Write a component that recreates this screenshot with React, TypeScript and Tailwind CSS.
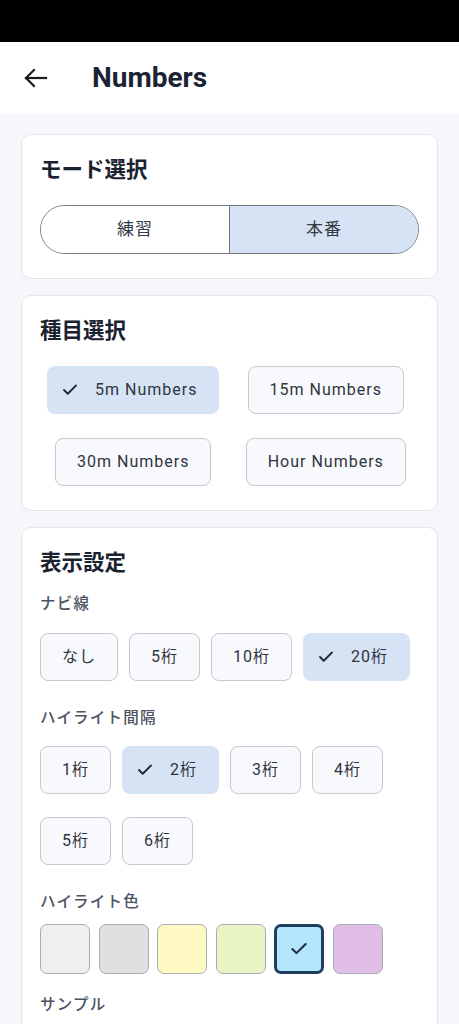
import { Check } from 'lucide-react'

const font = 'font-["Roboto","Noto_Sans_CJK_JP",sans-serif]'

function Chip({ label, selected }: { label: string; selected?: boolean }) {
  if (selected) {
    return (
      <div className="flex h-12 items-center rounded-[8px] bg-[#d6e3f5] pl-[14px] pr-[22px] text-[16px] tracking-[1px] text-[#2f3440]">
        <Check size={18} strokeWidth={2.4} className="text-[#1e2633]" />
        <span className="ml-[16px]">{label}</span>
      </div>
    )
  }
  return (
    <div className="flex h-12 items-center rounded-[8px] border border-[#c6c8ce] bg-[#f8f9fc] px-[21px] text-[16px] tracking-[1px] text-[#2f3440]">
      {label}
    </div>
  )
}

function Card({ children }: { children: React.ReactNode }) {
  return (
    <div className="rounded-[10px] border border-[#e2e5ea] bg-white px-[18px] pb-[24px] pt-[21px]">
      {children}
    </div>
  )
}

function Heading({ children }: { children: React.ReactNode }) {
  return <h2 className="h-[28px] text-[21.5px] leading-[28px] font-bold text-[#1a2230]">{children}</h2>
}

function SubLabel({ children, className = '' }: { children: React.ReactNode; className?: string }) {
  return (
    <p className={`h-[22px] text-[15.5px] leading-[22px] font-medium tracking-[1.2px] text-[#4b5363] ${className}`}>
      {children}
    </p>
  )
}

const swatches = ['#efefef', '#dfdfdf', '#fff9c4', '#e9f4c5', '#b3e5fc', '#e1bee7']

export default function App() {
  return (
    <div className={`min-h-screen bg-[#f5f7fa] ${font}`}>
      {/* status bar */}
      <div className="h-[42px] bg-black" />

      {/* app bar */}
      <div className="flex h-[72px] items-center bg-white">
        <svg width="24" height="20" viewBox="0 0 24 20" className="ml-[24px] text-[#1a1a1a]" fill="none" stroke="currentColor" strokeWidth="2.2" strokeLinecap="square">
          <path d="M2 10h20" />
          <path d="M10 2 2 10l8 8" />
        </svg>
        <h1 className="ml-[44px] text-[28px] font-bold text-[#1b2434]">Numbers</h1>
      </div>

      <div className="flex flex-col gap-[16px] px-[21px] pt-[20px]">
        {/* モード選択 */}
        <Card>
          <Heading>モード選択</Heading>
          <div className="mt-[21px] flex h-[49px] overflow-hidden rounded-full border border-[#74777f] text-[17px] tracking-[1px] text-[#333a46]">
            <div className="flex flex-1 items-center justify-center bg-white">練習</div>
            <div className="flex flex-1 items-center justify-center border-l border-[#74777f] bg-[#d6e3f5]">本番</div>
          </div>
        </Card>

        {/* 種目選択 */}
        <Card>
          <Heading>種目選択</Heading>
          <div className="mt-[21px] grid grid-cols-2 justify-items-center gap-x-[6px] gap-y-[24px]">
            <Chip label="5m Numbers" selected />
            <Chip label="15m Numbers" />
            <Chip label="30m Numbers" />
            <Chip label="Hour Numbers" />
          </div>
        </Card>

        {/* 表示設定 */}
        <div className="rounded-[10px] border border-[#e2e5ea] bg-white px-[18px] pb-[40px] pt-[21px]">
          <Heading>表示設定</Heading>
          <SubLabel className="mt-[16px]">ナビ線</SubLabel>
          <div className="mt-[18px] flex flex-wrap gap-x-[11px] gap-y-[23px]">
            <Chip label="なし" />
            <Chip label="5桁" />
            <Chip label="10桁" />
            <Chip label="20桁" selected />
          </div>

          <SubLabel className="mt-[26px]">ハイライト間隔</SubLabel>
          <div className="mt-[17px] flex w-[350px] flex-wrap gap-x-[11px] gap-y-[23px]">
            <Chip label="1桁" />
            <Chip label="2桁" selected />
            <Chip label="3桁" />
            <Chip label="4桁" />
            <Chip label="5桁" />
            <Chip label="6桁" />
          </div>

          <SubLabel className="mt-[26px]">ハイライト色</SubLabel>
          <div className="mt-[11px] flex gap-[8.6px]">
            {swatches.map((c, i) =>
              i === 4 ? (
                <div
                  key={c}
                  className="flex h-[50px] w-[50px] items-center justify-center rounded-[7px] border-[3px] border-[#1f3f5f] bg-[#b3e5fc]"
                >
                  <Check size={20} strokeWidth={2.4} className="text-[#1a2a3a]" />
                </div>
              ) : (
                <div
                  key={c}
                  className="h-[50px] w-[50px] rounded-[7px] border border-[#a9adb5]"
                  style={{ backgroundColor: c }}
                />
              )
            )}
          </div>

          <SubLabel className="mt-[20px]">サンプル</SubLabel>
        </div>
      </div>
    </div>
  )
}
